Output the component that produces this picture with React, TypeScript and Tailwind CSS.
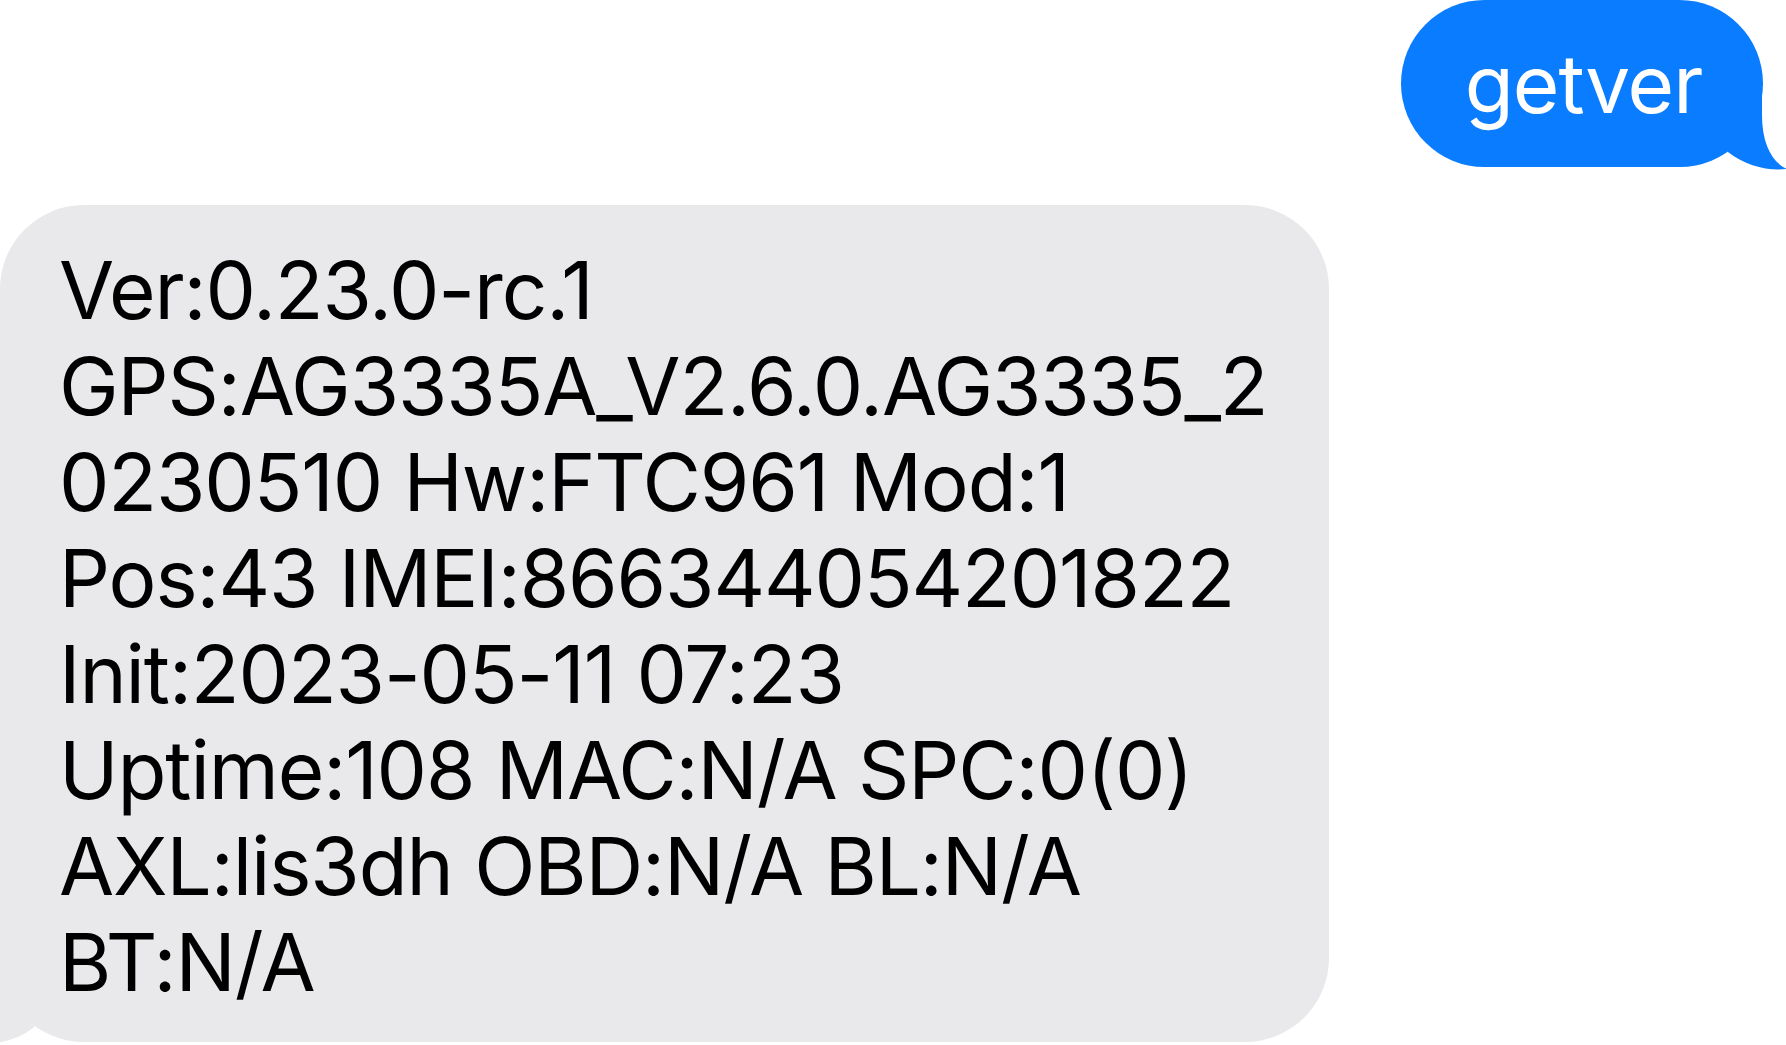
import React from "react";

const lines = [
  "Ver:0.23.0-rc.1",
  "GPS:AG3335A_V2.6.0.AG3335_2",
  "0230510 Hw:FTC961 Mod:1",
  "Pos:43 IMEI:866344054201822",
  "Init:2023-05-11 07:23",
  "Uptime:108 MAC:N/A SPC:0(0)",
  "AXL:lis3dh OBD:N/A BL:N/A",
  "BT:N/A",
];

export default function App() {
  return (
    <div
      className="relative flex h-[1045px] w-full flex-col overflow-hidden bg-white"
      style={{ fontFamily: "Inter, 'Noto Sans', sans-serif" }}
    >
      <div className="flex justify-end pr-[23px]">
        <div className="relative flex h-[167px] w-[362px] items-center justify-center rounded-[84px] bg-[#0a7cff]">
          <svg
            className="absolute left-0 top-0 overflow-visible"
            width="362"
            height="167"
            viewBox="0 0 362 167"
          >
            <path
              d="M361 84 L361 115 C361 145 372 163 386 169 C366 171 345 166 327 152 L279 84 Z"
              fill="#0a7cff"
            />
          </svg>
          <span className="relative pl-[3px] text-[80px] leading-[96px] tracking-[-1px] text-white">getver</span>
        </div>
      </div>
      <div className="mt-[38px] flex">
        <div className="relative h-[837px] w-[1329px] rounded-[84px] bg-[#e9e9eb] pl-[59px] pt-[37px]">
          <svg
            className="absolute left-0 top-0 overflow-visible"
            width="1329"
            height="837"
            viewBox="0 0 1329 837"
          >
            <path
              d="M0 753 L0 784 C0 814 -11 832 -25 838 C-5 840 16 836 33 823 L84 753 Z"
              fill="#e9e9eb"
            />
          </svg>
          <div className="relative text-[80px] leading-[96px] tracking-[-1.1px] text-black">
            {lines.map((l) => (
              <div key={l} className="whitespace-pre">
                {l}
              </div>
            ))}
          </div>
        </div>
      </div>
    </div>
  );
}
